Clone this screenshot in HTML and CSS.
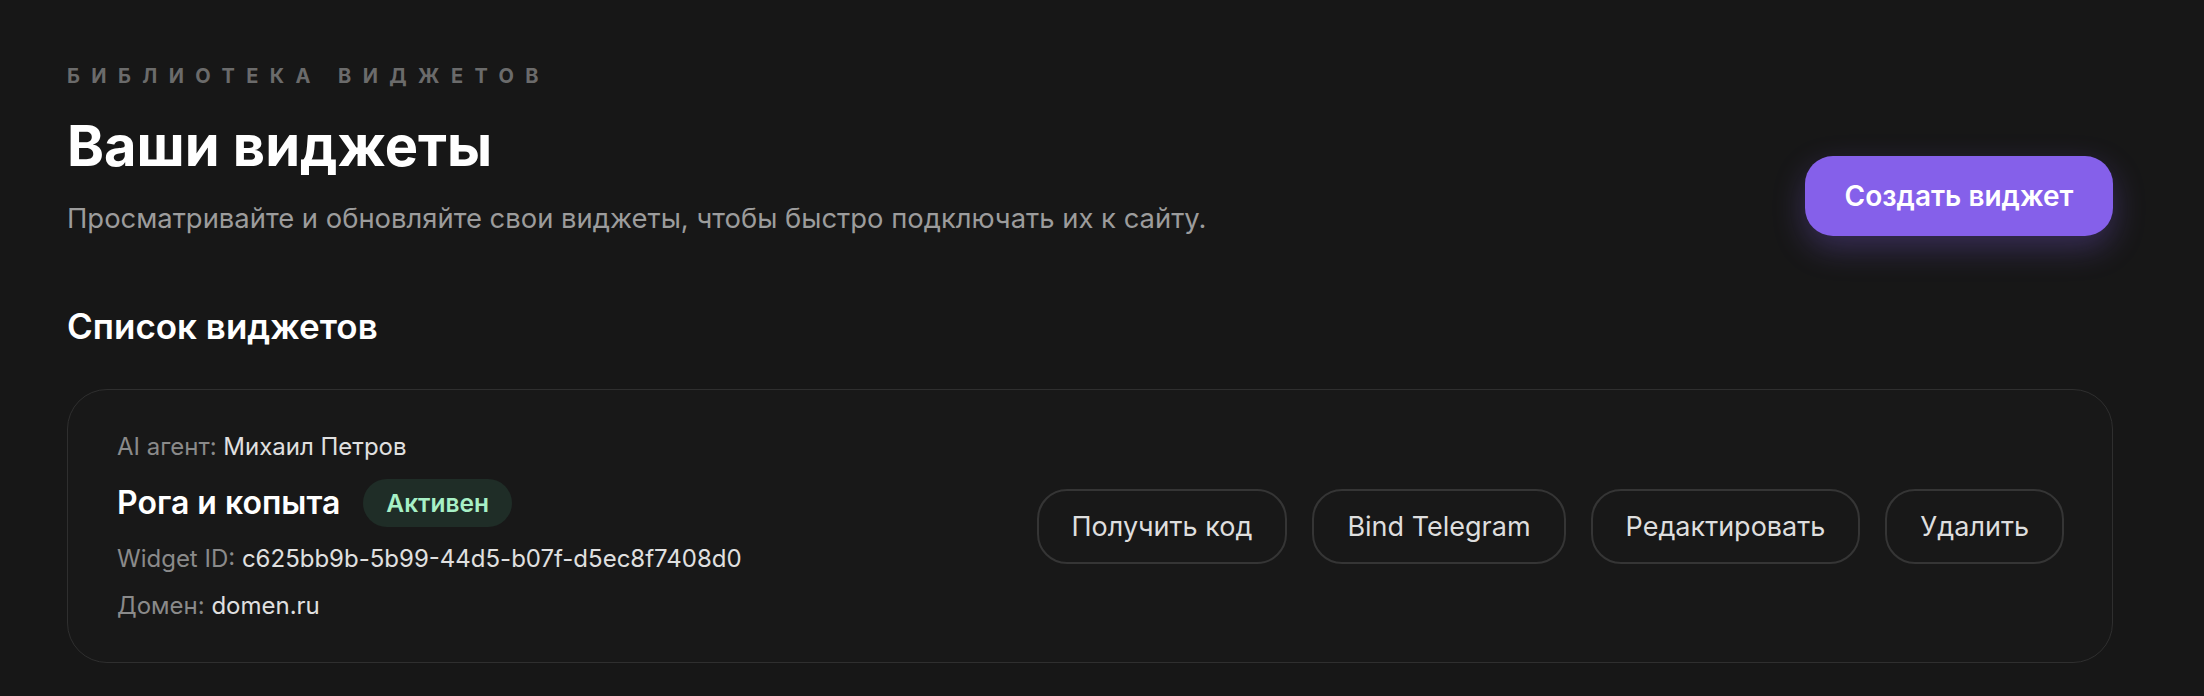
FILE: index.html
```html
<!DOCTYPE html>
<html lang="ru">
<head>
    <meta charset="UTF-8">
    <title>Ваши виджеты</title>
    <link rel="stylesheet" href="styles.css">
</head>
<body>

<div class="page">
    <div class="page-header">
        <div class="header-text">
            <p class="eyebrow">Библиотека виджетов</p>
            <h1 class="title">Ваши виджеты</h1>
            <p class="subtitle">Просматривайте и обновляйте свои виджеты, чтобы быстро подключать их к сайту.</p>
        </div>
        <button class="btn-create">Создать виджет</button>
    </div>

    <h2 class="section-title">Список виджетов</h2>

    <div class="widget-card">
        <div class="widget-info">
            <p class="meta"><span class="meta-label">AI агент:</span> Михаил Петров</p>
            <div class="widget-name-row">
                <span class="widget-name">Рога и копыта</span>
                <span class="badge">Активен</span>
            </div>
            <p class="meta"><span class="meta-label">Widget ID:</span> c625bb9b-5b99-44d5-b07f-d5ec8f7408d0</p>
            <p class="meta"><span class="meta-label">Домен:</span> domen.ru</p>
        </div>
        <div class="widget-actions">
            <button class="btn-outline">Получить код</button>
            <button class="btn-outline">Bind Telegram</button>
            <button class="btn-outline">Редактировать</button>
            <button class="btn-outline">Удалить</button>
        </div>
    </div>
</div>

</body>
</html>
```

FILE: styles.css
```css
* {
    margin: 0;
    padding: 0;
    box-sizing: border-box;
}

body {
    background: #171717;
    font-family: Inter, "Noto Sans", sans-serif;
    color: #ffffff;
}

.page {
    width: 2046px;
    margin-left: 67px;
    padding-top: 64px;
}

.page-header {
    display: flex;
    justify-content: space-between;
    align-items: flex-end;
}

.eyebrow {
    font-size: 20px;
    line-height: 24px;
    font-weight: 700;
    letter-spacing: 11.4px;
    text-transform: uppercase;
    color: #6b6b6b;
}

.title {
    margin-top: 28px;
    font-size: 56px;
    line-height: 60px;
    font-weight: 700;
    color: #ffffff;
}

.subtitle {
    margin-top: 24px;
    font-size: 27.4px;
    line-height: 36px;
    color: #9c9c9c;
}

.btn-create {
    width: 308px;
    height: 80px;
    border: none;
    border-radius: 28px;
    background: #8560ea;
    color: #ffffff;
    font-family: inherit;
    font-size: 28px;
    font-weight: 600;
    box-shadow: 0 12px 32px rgba(133, 96, 234, 0.3);
    cursor: pointer;
}

.section-title {
    margin-top: 68px;
    font-size: 35px;
    line-height: 44px;
    font-weight: 600;
}

.widget-card {
    display: flex;
    justify-content: space-between;
    align-items: center;
    margin-top: 41px;
    height: 274px;
    padding: 0 49px;
    border: 1px solid #2f2f2f;
    border-radius: 40px;
    background: #181818;
}

.widget-info {
    display: flex;
    flex-direction: column;
    gap: 17px;
}

.meta {
    font-size: 24px;
    line-height: 30px;
    color: #e0e0e0;
}

.meta-label {
    color: #8a8a8a;
}

.widget-name-row {
    display: flex;
    align-items: center;
    gap: 23px;
}

.widget-name {
    font-size: 32px;
    line-height: 40px;
    font-weight: 600;
}

.badge {
    height: 48px;
    padding: 0 23px;
    border-radius: 24px;
    background: #1f2d27;
    color: #a7f0c6;
    font-size: 24.5px;
    line-height: 48px;
    font-weight: 600;
}

.widget-actions {
    display: flex;
    gap: 25px;
    margin-right: -1px;
}

.btn-outline {
    height: 75px;
    padding: 0 33px;
    border: 2px solid #353535;
    border-radius: 30px;
    background: transparent;
    color: #dedede;
    font-family: inherit;
    font-size: 27px;
    cursor: pointer;
}
```
